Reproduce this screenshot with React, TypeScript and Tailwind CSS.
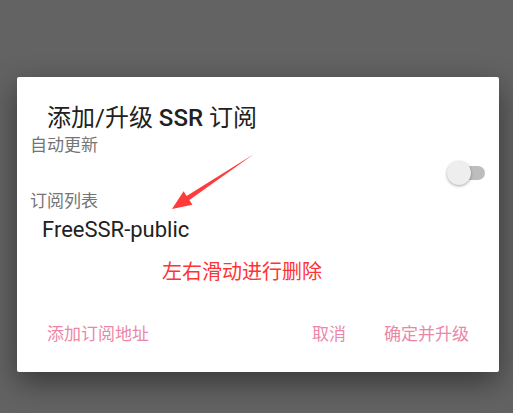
import React from 'react';

const font = { fontFamily: 'Roboto, "Noto Sans CJK SC", sans-serif' };

const Toggle = () => (
  <div className="relative w-[38px] h-[24px] flex items-center">
    <div className="absolute left-[12px] w-[26px] h-[14px] rounded-full bg-[#bdbdbd]" />
    <div className="absolute left-0 w-[24px] h-[24px] rounded-full bg-[#eeeeee] shadow-[0_1px_3px_rgba(0,0,0,0.35)]" />
  </div>
);

export default function App() {
  return (
    <div className="w-[513px] h-[413px] bg-[#636363] overflow-hidden pt-[77px] pl-[17px]" style={font}>
      <div className="relative w-[482px] h-[295px] bg-white rounded-[2px] shadow-[0_10px_30px_rgba(0,0,0,0.45)] pt-[21px] flex flex-col">
        <div className="h-[40px] leading-[40px] pl-[30px] text-[24px] text-[#212121] whitespace-nowrap">
          添加/升级 <span className="font-medium">SSR</span> 订阅
        </div>
        <div className="h-[15px] leading-[15px] pl-[13px] text-[17px] text-[#757575]">自动更新</div>
        <div className="h-[40px] flex items-center justify-end pr-[14px]">
          <Toggle />
        </div>
        <div className="h-[16px] leading-[16px] pl-[13px] text-[17px] text-[#757575]">订阅列表</div>
        <div className="h-[42px] leading-[42px] pl-[25px] text-[22px] text-[#212121]">FreeSSR-public</div>
        <div className="h-[42px] leading-[42px] pl-[145px] text-[20px] text-[#ff3333]">左右滑动进行删除</div>
        <div className="mt-[22px] h-[40px] flex items-center text-[17px] text-[#ec87a7]">
          <span className="pl-[30px]">添加订阅地址</span>
          <span className="ml-auto">取消</span>
          <span className="ml-[38px] mr-[30px]">确定并升级</span>
        </div>
        <svg className="absolute left-0 top-0 pointer-events-none" width="482" height="295">
          <polygon
            points="237,77 172.4,123.1 175.4,127.7 155,132 166.6,114.3 169.6,118.9"
            fill="#ff3b3b"
          />
        </svg>
      </div>
    </div>
  );
}
